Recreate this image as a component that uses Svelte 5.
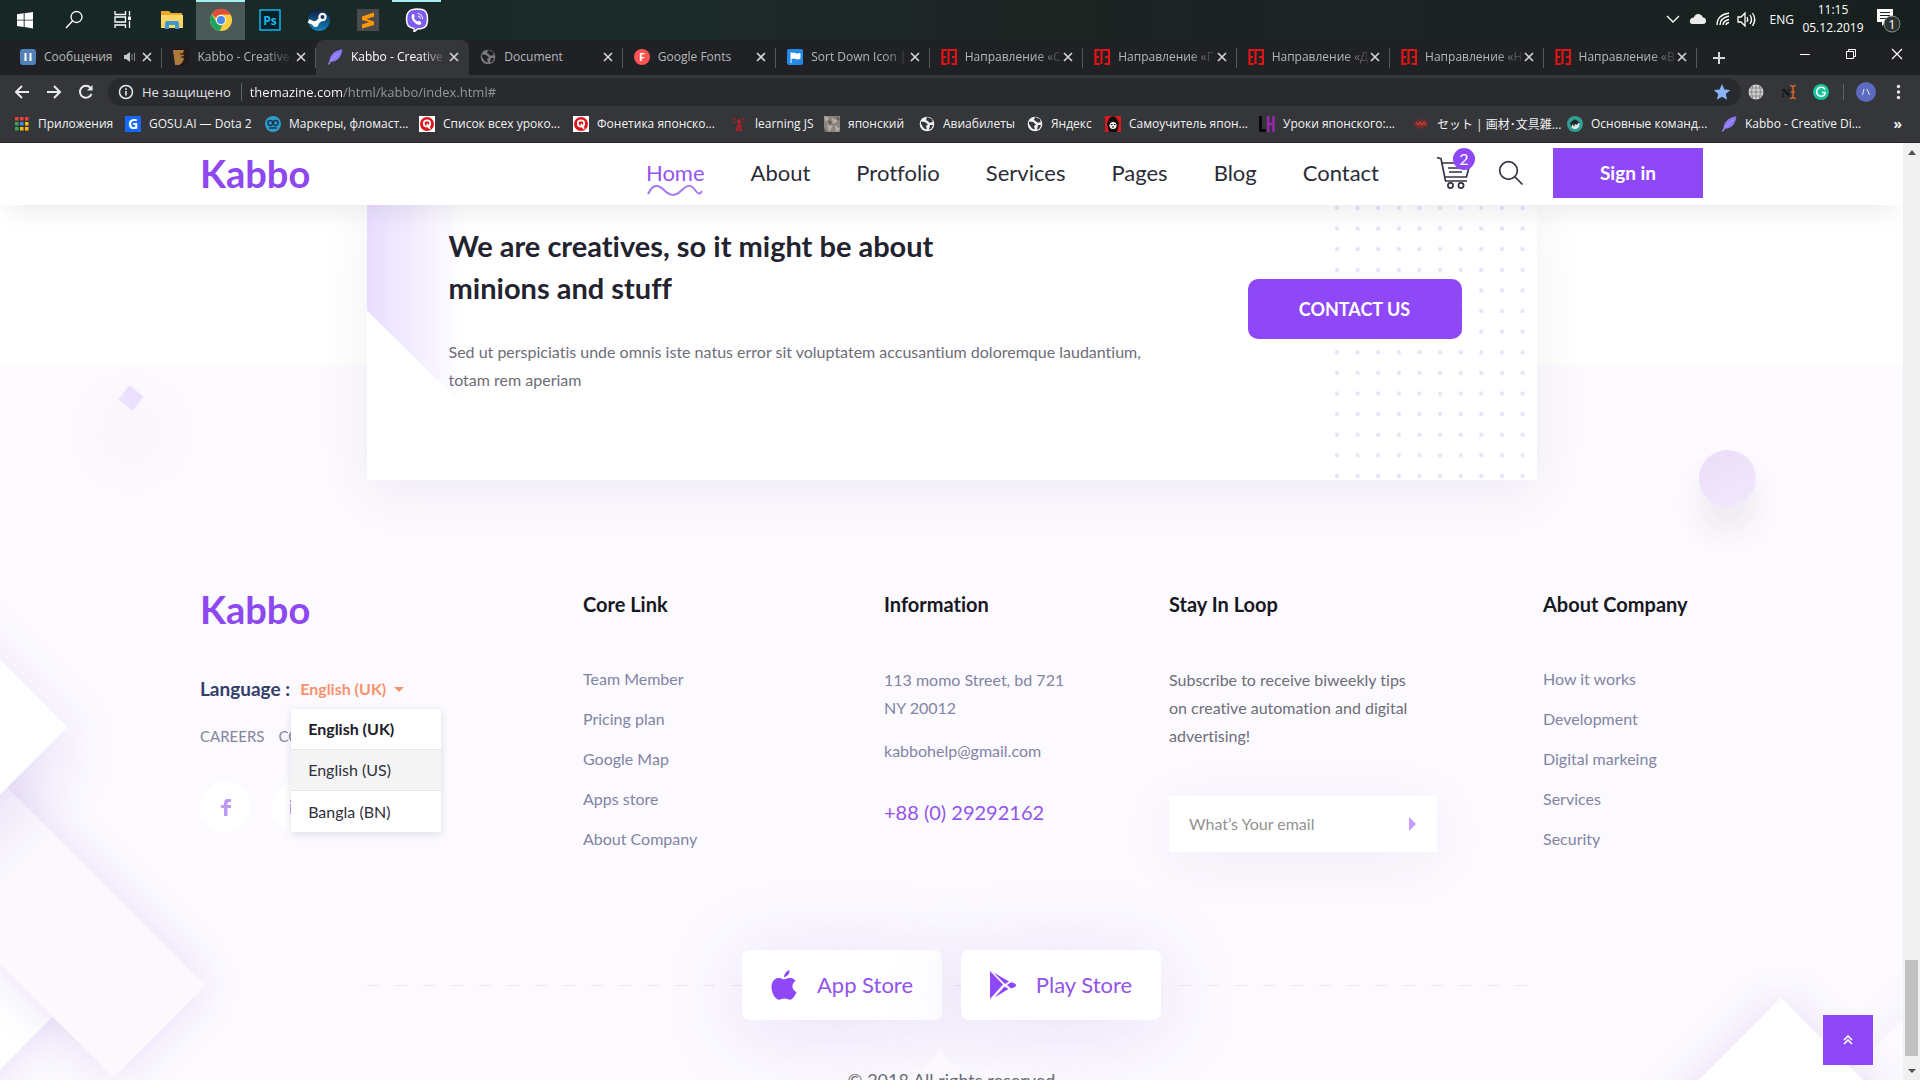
<script>
  let langOpen = $state(true);
  let language = $state('English (UK)');
  let email = $state('');
  let address = $state('themazine.com/html/kabbo/index.html#');

  const apps = ['start', 'search', 'taskview', 'folder', 'chrome', 'ps', 'steam', 'sublime', 'viber'];
  const tabs = [
    { icon: 'pause', title: 'Сообщения', audio: true },
    { icon: 'comic', title: 'Kabbo - Creative', fade: true },
    { icon: 'feather', title: 'Kabbo - Creative', active: true, fade: true },
    { icon: 'globeDim', title: 'Document' },
    { icon: 'fonts', title: 'Google Fonts' },
    { icon: 'flag', title: 'Sort Down Icon |', fade: true },
    { icon: 'red', title: 'Направление «С', fade: true },
    { icon: 'red', title: 'Направление «Г', fade: true },
    { icon: 'red', title: 'Направление «Д', fade: true },
    { icon: 'red', title: 'Направление «Н', fade: true },
    { icon: 'red', title: 'Направление «В', fade: true },
  ];
  const bookmarks = [
    ['apps', 'Приложения'],
    ['gosu', 'GOSU.AI — Dota 2'],
    ['owl', 'Маркеры, фломаст...'],
    ['q', 'Список всех уроко...'],
    ['q', 'Фонетика японско...'],
    ['tower', 'learning JS'],
    ['photo', 'японский'],
    ['globe', 'Авиабилеты'],
    ['globe', 'Яндекс'],
    ['monk', 'Самоучитель япон...'],
    ['lh', 'Уроки японского:...'],
    ['stamp', 'セット | 画材･文具雑...'],
    ['teal', 'Основные команд...'],
    ['feather', 'Kabbo - Creative Di...'],
  ];
  const nav = ['Home', 'About', 'Protfolio', 'Services', 'Pages', 'Blog', 'Contact'];
  const coreLinks = ['Team Member', 'Pricing plan', 'Google Map', 'Apps store', 'About Company'];
  const companyLinks = ['How it works', 'Development', 'Digital markeing', 'Services', 'Security'];
  const languages = ['English (UK)', 'English (US)', 'Bangla (BN)'];
</script>

{#snippet appIcon(kind)}
  <svg width="24" height="24" viewBox="0 0 24 24" aria-hidden="true">
    {#if kind === 'start'}
      <path fill="#fff" d="M4 6.3l6.700-1v6.400H4zM11.600 5.200L20 4v7.700h-8.400zM4 12.600h6.700v6.300L4 18zM11.600 12.600H20V20.400l-8.400-1.300z" />
    {:else if kind === 'search'}
      <circle cx="14.500" cy="9" r="5.500" fill="none" stroke="#fff" stroke-width="1.300" /><path d="M10.500 13L4 20" stroke="#fff" stroke-width="1.400" />
    {:else if kind === 'taskview'}
      <path fill="none" stroke="#fff" stroke-width="1.300" d="M4 3v3.500h10.500V3M4 20v-3h10.500v3M4 9h10.500v5H4zM18.500 3v4.500M18.500 13v7" /><rect x="17" y="8.500" width="3" height="3.500" fill="#fff" />
    {:else if kind === 'folder'}
      <path d="M1 3h8l2 2h11v15H1z" fill="#e6a92a" /><path d="M1 7h22v13H1z" fill="#ffd766" /><path d="M5 21v-6q0-2 2-2h10q2 0 2 2v6h-4v-4H9v4z" fill="#3c97d3" />
    {:else if kind === 'chrome'}
      <circle cx="12" cy="12" r="11" fill="#ffcd40" /><path d="M12 1a11 11 0 0 1 9.600 5.600H12a5.400 5.400 0 0 0-5 3.400L2.800 6A11 11 0 0 1 12 1z" fill="#e24a3b" /><path d="M2.800 6l4.700 8.500a5.400 5.400 0 0 0 6 2.700L10.700 23A11 11 0 0 1 2.800 6z" fill="#1da462" /><circle cx="12" cy="12" r="5" fill="#fff" /><circle cx="12" cy="12" r="4" fill="#4788f0" />
    {:else if kind === 'ps'}
      <rect x="2" y="2" width="20" height="20" fill="#03202b" stroke="#10b5e8" stroke-width="1.500" /><text x="12" y="16.500" text-anchor="middle" font-size="12" font-weight="700" fill="#19b8ec">Ps</text>
    {:else if kind === 'steam'}
      <defs><linearGradient id="steam" x2="0" y2="1"><stop stop-color="#101c3d" /><stop offset="1" stop-color="#1383bd" /></linearGradient></defs>
      <circle cx="12" cy="12" r="11" fill="url(#steam)" /><path d="M1.500 13l7 3 5.500-5" stroke="#fff" stroke-width="4" fill="none" /><circle cx="15.500" cy="9" r="4.200" fill="#fff" /><circle cx="15.500" cy="9" r="2.300" fill="#17335b" stroke="#fff" stroke-width=".6" /><circle cx="8.500" cy="16" r="3" fill="#fff" />
    {:else if kind === 'sublime'}
      <rect x="1" y="1" width="22" height="22" rx="1" fill="#4a4a4a" /><path d="M6 8.500L18 4.500v4L10.500 11 18 13.500v3.500L6 20.500v-4l7.500-2.500L6 12z" fill="#ff9800" />
    {:else if kind === 'viber'}
      <path d="M12 1c8 0 10.500 2.500 10.500 10S20 21 12.500 21L9 24v-3.500C3.500 19.500 1.500 17.500 1.500 11S4 1 12 1z" fill="#7d5cf0" stroke="#fff" stroke-width="1.500" /><path d="M7.500 6.200c2-1 2.500 2.500 1.700 3.300-.6.800 2.500 4.300 3.600 3.700 1.200-.7 4 1 3.400 2.300-1.300 3-5.300.7-7.200-1.400S5.500 8 7.500 6.200z" fill="#fff" /><path d="M12.500 5.500q5 .5 5 5.500M13 8q2.300.3 2.300 2.600" fill="none" stroke="#fff" />
    {/if}
  </svg>
{/snippet}

{#snippet favicon(kind)}
  <svg class="fav" width="16" height="16" viewBox="0 0 16 16" aria-hidden="true">
    {#if kind === 'pause'}
      <rect width="16" height="16" rx="3" fill="#5181b8" /><path d="M5.500 4v8M10.500 4v8" stroke="#fff" stroke-width="2" />
    {:else if kind === 'comic'}
      <rect x="1" width="15" height="16" fill="#201b18" /><path d="M0 1h11l-1 3 1 2-1 2 1 2-2 4-3 2H2z" fill="#b07a3c" /><path d="M7 5h4M8 8h3" stroke="#111" />
    {:else if kind === 'feather'}
      <path d="M15.500.5C9 1 3 5 2.500 12L.8 15.500l1.200.3 1.500-3C10 13 14 9 15.500.5z" fill="#8b78f8" /><path d="M2 15C5 10 8 7 12 4" stroke="#b8acff" stroke-width=".7" fill="none" />
    {:else if kind === 'globe' || kind === 'globeDim'}
      <circle cx="8" cy="8" r="7.300" fill={kind === 'globe' ? '#f1f3f4' : '#77797c'} /><path d="M2 5.500l4 .5 3 2.500L7 10l1 3.500-3-1L2 8zM8 1l5 2 .7 3-3 .7L8.500 5 7 4z M11 9h3l-1.500 3.500L10 14z" fill={kind === 'globe' ? '#35363a' : '#202124'} />
    {:else if kind === 'fonts'}
      <circle cx="8" cy="8" r="8" fill="#ff5252" /><text x="8" y="12" text-anchor="middle" font-size="11" font-weight="700" fill="#fff">F</text>
    {:else if kind === 'flag'}
      <rect width="16" height="16" rx="2" fill="#228ae6" /><path d="M4 3v11M4.500 4.500q2-1 4 0t4.500 0v5q-2.500 1-4.500 0t-4 0z" fill="#fff" stroke="#fff" />
    {:else if kind === 'red'}
      <path d="M6 1H1.500v14H6M1.500 8H5M10.500 1H7.500v14M10.500 1H15v14h-4.500M11 8h4" fill="none" stroke="#e01414" stroke-width="2.200" />
    {:else if kind === 'apps'}
      {#each [0, 1, 2] as r}
        {#each [0, 1, 2] as c}
          <rect x={1 + c * 5} y={1 + r * 5} width="3.500" height="3.500" fill={['#ea4335', '#ea4335', '#ea4335', '#34a853', '#4285f4', '#fbbc05', '#34a853', '#fbbc05', '#fbbc05'][r * 3 + c]} />
        {/each}
      {/each}
    {:else if kind === 'gosu'}
      <rect width="16" height="16" fill="#1567f5" /><text x="8" y="13" text-anchor="middle" font-size="14" font-weight="700" fill="#fff">G</text>
    {:else if kind === 'owl'}
      <circle cx="8" cy="8" r="8" fill="#2f9ccb" /><g fill="none" stroke="#153b52" stroke-width="1.500"><circle cx="5.300" cy="7" r="2.400" /><circle cx="10.700" cy="7" r="2.400" /><path d="M4 12h8" /></g>
    {:else if kind === 'q'}
      <rect width="16" height="16" fill="#fff" /><circle cx="8" cy="8" r="7" fill="#e0151b" /><circle cx="8" cy="7.500" r="3.200" fill="none" stroke="#fff" stroke-width="1.800" /><path d="M8 8l3 5" stroke="#fff" stroke-width="1.800" />
    {:else if kind === 'tower'}
      <path d="M8 5L5 15M8 5l3 10M6 10h4l-4 4h5M2 2l3 2M14 2l-3 2M2 7l3-1M14 7l-3-1" fill="none" stroke="#a8222c" stroke-width="1.300" /><circle cx="8" cy="5" r="1.700" fill="#c3222c" />
    {:else if kind === 'photo'}
      <rect width="16" height="16" fill="#8b857f" /><path d="M0 0l5 2-3 4zM8 2l6 3-5 3zM3 9l6 1-4 6zM11 9l5 4-4 3z" fill="#b5afa8" /><path d="M4 4l4 2-2 3zM12 0l4 3-2 2zM0 12l3 4H0z" fill="#5f5a55" />
    {:else if kind === 'monk'}
      <rect width="16" height="16" fill="#d71a1d" /><path d="M8 0q5 2 6 8l-2 8H4L2 8q1-6 6-8z" fill="#110d0d" /><circle cx="8" cy="9.500" r="3.500" fill="#f3efea" /><path d="M6 8.500h1.500M9 8.500h1.500M7 11h2" stroke="#111" />
    {:else if kind === 'lh'}
      <path d="M1.500 0v14.500H7" fill="none" stroke="#000" stroke-width="2.500" /><path d="M9.200 0v16M14.500 0v16M9 8h6" stroke="#9c27b0" stroke-width="2.400" />
    {:else if kind === 'stamp'}
      <path d="M0 6l3 .5L4 3l2 2 2-3 2 3 3-2v3l3 .5-2 2.500 1 2-3-.5-2 3-2-2-3 1.500-1-2.500-3 .5 1-2z" fill="#7c2b2b" /><path d="M3 6l2 3 2-3 2 3 2-3 2 3" fill="none" stroke="#c64b45" />
    {:else if kind === 'teal'}
      <circle cx="8" cy="8" r="8" fill="#2f9e94" /><circle cx="8" cy="8.500" r="4.500" fill="#dfe9e8" /><path d="M3 7q5-7 10 0l-2 0-1 2-2-1-1 3-1-3-2 3z" fill="#1d2b2b" />
    {/if}
  </svg>
{/snippet}

<svelte:head><title>Kabbo</title></svelte:head>

<div class="desktop">
  <div class="taskbar">
    <div class="apps">
      {#each apps as app}
        <button class="app" class:current={app === 'chrome'} class:running={app === 'viber'} aria-label={app}>{@render appIcon(app)}</button>
      {/each}
    </div>
    <div class="tray">
      <svg width="98" height="20" viewBox="0 0 98 20" aria-hidden="true">
        <g fill="none" stroke="#fff" stroke-width="1.300">
          <path d="M3 7l6 6 6-6" />
          <path d="M53 16q0-10 12-12M56 16q0-7 9-9M59 16q0-4 6-5.500M62 16q0-2 3-2.500" />
          <path d="M74 8h3l4-4v13l-4-4h-3zM83 8q1.500 2.500 0 5M86 6q3 4.500 0 9M88.500 4q4.500 6.500 0 13" />
        </g>
        <path d="M28 15q-3-1-2-4t4-2.500q1-4 5-3.500 3 .5 4 3.500 3 0 3 3.500 0 3-3 3z" fill="#ececec" />
      </svg>
      <span>ENG</span>
      <span class="clock">11:15<br />05.12.2019</span>
      <svg width="32" height="32" viewBox="0 0 32 32" aria-hidden="true">
        <path d="M3 6h16v13h-7l-4 4v-4H3z" fill="#fff" /><path d="M6 9.500h10M6 12.500h10M6 15.500h7" stroke="#1c2625" /><circle cx="18" cy="21" r="8" fill="#2c3332" stroke="#8a8f8e" /><text x="18" y="26" font-size="13" text-anchor="middle" fill="#fff">1</text>
      </svg>
    </div>
  </div>

  <div class="tabstrip">
    <div class="tabs">
      {#each tabs as tab}
        <div class="tab" class:active={tab.active}>
          <button class="tab-main">
            {@render favicon(tab.icon)}
            <span class="tab-title" class:fade={tab.fade}>{tab.title}</span>
          </button>
          {#if tab.audio}
            <svg width="14" height="12" viewBox="0 0 14 12" aria-hidden="true"><path d="M1 4h2l4-3v10L3 8H1z" fill="#c4c7ca" /><path d="M9 3v6M11.500 2v8" stroke="#85888c" /></svg>
          {/if}
          <button class="x" aria-label="Close tab"><svg width="10" height="10" viewBox="0 0 10 10"><path d="M1 1l8 8M9 1L1 9" stroke="currentColor" stroke-width="1.600" /></svg></button>
        </div>
      {/each}
    </div>
    <button class="plus" aria-label="New tab"><svg width="14" height="14" viewBox="0 0 14 14"><path d="M7 1v12M1 7h12" stroke="#d5d7da" stroke-width="2" /></svg></button>
    <div class="window-buttons">
      <button aria-label="Minimize"><svg width="12" height="12" viewBox="0 0 12 12"><path d="M1 6.500h10" stroke="#fff" /></svg></button>
      <button aria-label="Restore"><svg width="12" height="12" viewBox="0 0 12 12"><path d="M1.500 3.500h7v7h-7zM3.500 3V1.500h7v7H9" fill="none" stroke="#fff" /></svg></button>
      <button aria-label="Close window"><svg width="12" height="12" viewBox="0 0 12 12"><path d="M1 1l10 10M11 1L1 11" stroke="#fff" stroke-width="1.200" /></svg></button>
    </div>
  </div>

  <div class="toolbar">
    <div class="history">
      <button aria-label="Back"><svg width="16" height="16" viewBox="0 0 16 16"><path d="M15 8H2M8 2L2 8l6 6" /></svg></button>
      <button aria-label="Forward"><svg width="16" height="16" viewBox="0 0 16 16"><path d="M1 8h13M8 2l6 6-6 6" /></svg></button>
      <button aria-label="Reload"><svg width="16" height="16" viewBox="0 0 16 16"><path d="M13.500 10a6 6 0 1 1-1-6.200L14 5.500" /><path d="M14.500 1v5.500H9z" class="solid" /></svg></button>
    </div>
    <div class="omnibox">
      <svg width="16" height="16" viewBox="0 0 16 16" aria-hidden="true"><circle cx="8" cy="8" r="6.500" fill="none" stroke="#e8eaed" stroke-width="1.500" /><path d="M8 7v4.500M8 4.300v1.600" stroke="#e8eaed" stroke-width="1.600" /></svg>
      <span class="secure">Не защищено</span>
      <input class="url" aria-label="Address" bind:value={address} />
      <svg width="18" height="18" viewBox="0 0 18 18" aria-hidden="true"><path d="M9 1l2.400 5.400 5.800.6-4.400 3.900 1.300 5.900L9 13.700l-5.100 3.100 1.300-5.900L.8 7l5.800-.6z" fill="#8ab4f8" /></svg>
    </div>
    <svg class="extensions" width="179" height="26" viewBox="0 0 179 26" aria-hidden="true">
      <circle cx="15" cy="13" r="7.500" fill="#d2d2d2" /><path d="M15 5.500v15M7.500 13h15M9 9h12M9 17h12M11.500 7q-2 6 0 12M18.500 7q2 6 0 12" stroke="#77797c" fill="none" stroke-width=".8" />
      <text x="45" y="18" text-anchor="middle" font-size="13" font-weight="700" fill="#111" class="serif">N</text><path d="M49 6.500q3 0 3 2v9q0 2-3 2M55 6.500q-3 0-3 2v9q0 2 3 2M50 13h4" fill="none" stroke="#d0682c" stroke-width="1.500" />
      <circle cx="80" cy="13" r="8" fill="#15c39a" /><path d="M84 10.500a4.500 4.500 0 1 0 0 4.500v-1.500h-3" fill="none" stroke="#fff" stroke-width="1.600" />
      <path d="M102.500 5v16" stroke="#5f6368" />
      <circle cx="125" cy="13" r="10" fill="#5c6bc0" /><path d="M121.500 16l1.500-6M126 10l2.500 6" stroke="#e3e6ff" fill="none" />
      <circle cx="157.500" cy="7.500" r="1.700" fill="#e8eaed" /><circle cx="157.500" cy="13" r="1.700" fill="#e8eaed" /><circle cx="157.500" cy="18.500" r="1.700" fill="#e8eaed" />
    </svg>
  </div>

  <div class="bookmarks">
    {#each bookmarks as [icon, label]}
      <a href="#bookmark">{@render favicon(icon)}<span>{label}</span></a>
    {/each}
    <button class="more" aria-label="More bookmarks">»</button>
  </div>

  <div class="viewport">
    <div class="page">
      <header>
        <a class="logo" href="#home">Kabbo</a>
        <nav>
          {#each nav as item, i}
            <a href="#{item}" class:on={i === 0}>{item}
              {#if i === 0}
                <svg class="wave" width="56" height="12" viewBox="0 0 56 12" aria-hidden="true"><path d="M1 9C6-1 11-1 17 5s11 7 18 0 10-4 13 0 5 5 7 1" fill="none" stroke="#a678f5" stroke-width="2" /></svg>
              {/if}
            </a>
          {/each}
        </nav>
        <button class="cart" aria-label="Cart, 2 items">
          <svg width="36" height="34" viewBox="0 0 36 34"><g fill="none" stroke="#333342" stroke-width="1.700"><path d="M1 1.500l4 1.200L9.500 25H31M6.500 7H34l-3.500 14H9M12 12h15M13 16h13M14 7h12" /><circle cx="14.500" cy="29.500" r="2.600" /><circle cx="25" cy="29.500" r="2.600" /></g></svg>
          <span>2</span>
        </button>
        <button class="find" aria-label="Search"><svg width="26" height="26" viewBox="0 0 26 26"><circle cx="10.500" cy="10.500" r="8.800" fill="none" stroke="#333342" stroke-width="1.700" /><path d="M17 17l7.500 7.500" stroke="#333342" stroke-width="1.700" /></svg></button>
        <button class="signin">Sign in</button>
      </header>

      <section class="cta">
        <div class="card">
          <div class="wedge"></div>
          <svg class="dots" width="200" height="100%" aria-hidden="true">
            <defs><pattern id="dot" width="20.620" height="20.620" patternUnits="userSpaceOnUse"><circle cx="3" cy="3" r="2.200" fill="#e9e3f8" /></pattern></defs>
            <rect width="194" height="100%" fill="url(#dot)" />
          </svg>
          <div class="copy">
            <h2>We are creatives, so it might be about minions and stuff</h2>
            <p>Sed ut perspiciatis unde omnis iste natus error sit voluptatem accusantium doloremque laudantium, totam rem aperiam</p>
          </div>
          <button class="contact">CONTACT US</button>
        </div>
      </section>

      <footer>
        <div class="columns">
          <div class="brand">
            <a class="logo" href="#home">Kabbo</a>
            <div class="language">
              <span id="lang-label">Language :</span>
              <div class="picker">
                <button class="toggle" aria-labelledby="lang-label" aria-haspopup="listbox" aria-expanded={langOpen} onclick={() => (langOpen = !langOpen)}>{language}<i></i></button>
                {#if langOpen}
                  <div class="menu" role="listbox" aria-labelledby="lang-label">
                    {#each languages as option, i}
                      <button role="option" aria-selected={option === language} class:chosen={option === language} class:hover={i === 1} onclick={() => { language = option; langOpen = false; }}>{option}</button>
                    {/each}
                  </div>
                {/if}
              </div>
            </div>
            <div class="small-links"><a href="#careers">CAREERS</a><a href="#contact">CONTACT</a></div>
            <div class="social">
              <a href="#facebook" aria-label="Facebook"><svg width="12" height="18" viewBox="0 0 12 18"><path d="M11 1v3H9Q7.500 4 7.500 5.500V7H11v3H7.500v8H4v-8H1V7h3V5q0-4 4-4z" fill="#bd98f5" /></svg></a>
              <a href="#linkedin" aria-label="LinkedIn"><svg width="18" height="16" viewBox="0 0 18 16"><path d="M1 5h3v10H1zM1 1h3v2.500H1zM7 5h3v2q3-4 7 0v8h-3V8q-2-2-4 0v7H7z" fill="#bd98f5" /></svg></a>
            </div>
          </div>
          <div>
            <h3>Core Link</h3>
            <ul>{#each coreLinks as link}<li><a href="#link">{link}</a></li>{/each}</ul>
          </div>
          <div>
            <h3>Information</h3>
            <address>113 momo Street, bd 721<br />NY 20012</address>
            <a class="mail" href="#mail">kabbohelp@gmail.com</a>
            <a class="phone" href="#phone">+88 (0) 29292162</a>
          </div>
          <div>
            <h3>Stay In Loop</h3>
            <p class="note">Subscribe to receive biweekly tips on creative automation and digital advertising!</p>
            <form class="subscribe">
              <input type="email" aria-label="Your email" placeholder="What’s Your email" bind:value={email} />
              <button type="button" aria-label="Subscribe"><svg width="8" height="14" viewBox="0 0 8 14"><path d="M0 0l7 7-7 7z" fill="#c49cfb" /></svg></button>
            </form>
          </div>
          <div>
            <h3>About Company</h3>
            <ul>{#each companyLinks as link}<li><a href="#link">{link}</a></li>{/each}</ul>
          </div>
        </div>

        <div class="stores">
          <a href="#appstore">
            <svg width="26" height="30" viewBox="0 0 26 30" aria-hidden="true"><path d="M18.500 0q.5 5-5.500 7.500Q13 2 18.500 0zM13 9.500c3-1 4-1.700 6.500-1.500 2.300.2 4 1.300 5 2.800-4.500 3-4 9 1 11.200-1.500 4-4 7.500-6.500 7.700-2 0-3-1.200-5.500-1.200S10 29.700 8 29.700C3 29.500-1 19 1 13.500 2 10 5 8 8 8c2 0 3.500 1 5 1.500z" fill="#8e48f8" /></svg>
            App Store
          </a>
          <a href="#playstore">
            <svg width="26" height="28" viewBox="0 0 26 28" aria-hidden="true"><path d="M0 0l13 13.500L0 28zM3.500 1.500L19 10.500l-4 2.500zM14.500 15.500l4 2.500-14 8.500zM17 14l4-2.700q5 1 5 3T21 17.500z" fill="#8e48f8" /></svg>
            Play Store
          </a>
        </div>
        <p class="copyright">© 2018 All rights reserved</p>
      </footer>

      <div class="decor" aria-hidden="true">
        <i class="shape low-left"></i>
        <i class="shape slab"></i>
        <i class="shape left"></i>
        <i class="shape far-right"></i>
        <i class="shape right"></i>
        <i class="halo"></i>
        <i class="chip"></i>
        <i class="ball"></i>
      </div>
      <button class="top" aria-label="Back to top"><svg width="10" height="10" viewBox="0 0 10 10"><path d="M1 5l4-4 4 4M1 9l4-4 4 4" fill="none" stroke="#fff" stroke-width="1.700" /></svg></button>
    </div>
    <div class="scrollbar"><i class="up"></i><i class="thumb"></i><i class="down"></i></div>
  </div>
</div>

<style>
  :global(body) { margin: 0; overflow: hidden; }
  * { box-sizing: border-box; }
  a { color: inherit; text-decoration: none; }
  button { border: 0; padding: 0; background: none; color: inherit; font: inherit; cursor: pointer; }
  svg { display: block; flex: none; }
  .desktop { height: 100vh; display: flex; flex-direction: column; overflow: hidden; font-family: 'Open Sans', 'Noto Sans CJK JP', sans-serif; font-size: 12px; color: #fff; background: #202124; }

  .taskbar { flex: none; height: 40px; display: flex; justify-content: space-between; background: linear-gradient(90deg, #172726, #1c2b29 35%, #1d2322 58%, #1b2524 70%, #18201f); }
  .apps { display: flex; }
  .app { width: 49px; display: grid; place-items: center; padding-bottom: 2px; border-top: 2px solid transparent; }
  .app.current { background: #4a5856; border-color: #a6f0ef; }
  .app.running { border-color: #a6f0ef; }
  .tray { display: flex; align-items: center; gap: 8px; padding: 0 14px 2px 0; }
  .clock { width: 62px; text-align: center; line-height: 18px; margin-right: 2px; white-space: nowrap; }

  .tabstrip { flex: none; height: 35px; display: flex; align-items: stretch; padding-left: 9px; color: #b4b8bc; }
  .tabs { flex: 0 1 1688px; min-width: 0; display: flex; }
  .tab { flex: 1 1 0; min-width: 0; display: flex; align-items: center; gap: 2px; padding: 0 7px 2px 11px; background: linear-gradient(#55585c, #55585c) right center / 1px 20px no-repeat; }
  .tab-main { flex: 1; min-width: 0; display: flex; align-items: center; gap: 8px; text-align: left; }
  .tab-title { white-space: nowrap; }
  .tab-title.fade { mask-image: linear-gradient(90deg, #000 75%, rgba(0, 0, 0, .15)); }
  .tab.active { background: #35363a; color: #fff; border-radius: 8px 8px 0 0; }
  .x { width: 16px; height: 18px; display: grid; place-items: center; color: #d5d7da; }
  .plus { width: 44px; display: grid; place-items: center; }
  .window-buttons { margin-left: auto; display: flex; height: 28px; }
  .window-buttons button { width: 46px; display: grid; place-items: center; }

  .toolbar { flex: none; height: 34px; display: flex; align-items: center; background: #35363a; font-size: 13px; }
  .history { width: 108px; display: flex; gap: 16px; padding-left: 14px; }
  .history svg { fill: none; stroke: #e8eaed; stroke-width: 2; }
  .history .solid { fill: #e8eaed; stroke: none; }
  .omnibox { flex: 1; height: 28px; display: flex; align-items: center; gap: 8px; padding: 0 10px; background: #282a2d; border-radius: 14px; }
  .secure { padding-right: 10px; color: #e1e3e6; border-right: 1px solid #5f6368; line-height: 18px; }
  .url { flex: 1; border: 0; padding: 0; outline: 0; background: linear-gradient(90deg, #fff 93px, #969ba1 93px); background-clip: text; color: transparent; font: inherit; }
  .serif { font-family: 'Liberation Serif', serif; }

  .bookmarks { flex: none; height: 34px; display: grid; align-items: center; grid-template-columns: 111px 140px 154px 154px 158px 93px 95px 108px 78px 154px 154px 154px 154px 1fr auto; padding: 0 18px 4px 14px; background: #35363a; border-bottom: 1px solid #26282b; color: #f1f3f4; }
  .bookmarks a { display: flex; align-items: center; gap: 8px; min-width: 0; white-space: nowrap; }
  .more { font-size: 14px; font-weight: 700; }

  .viewport { flex: 1; min-height: 0; display: flex; }
  .page { flex: 1; min-width: 0; position: relative; overflow: hidden; isolation: isolate; background: #fcfaff; font-family: Lato, 'Open Sans', sans-serif; font-size: 16px; font-variant-ligatures: none; line-height: 28px; color: #6d6d78; }
  .logo { color: #8e48f0; font-size: 38px; line-height: 48px; font-weight: 700; }

  header { position: relative; z-index: 3; height: 62px; padding: 0 200px 2px; display: flex; align-items: center; background: #fff; box-shadow: 0 10px 30px -8px rgba(30, 30, 40, .11); color: #2c2c38; }
  nav { display: flex; gap: 46px; margin-left: auto; font-size: 22px; }
  nav a { position: relative; }
  nav .on { color: #9355f2; }
  .wave { position: absolute; left: 1px; top: 26px; }
  .cart { position: relative; margin-left: 57px; }
  .cart span { position: absolute; left: 17px; top: -8px; width: 22px; height: 22px; border-radius: 50%; background: #8e48f8; color: #fff; font-size: 16px; line-height: 22px; }
  .find { margin: 0 29px 0 26px; }
  .signin { width: 150px; height: 50px; background: #8e48f8; color: #fff; font-size: 19px; font-weight: 700; }

  .cta { position: relative; z-index: 1; background: linear-gradient(#fff 160px, transparent 160px); padding: 0 40px; }
  .card { position: relative; max-width: 1170px; margin: 0 auto; padding: 20px 75px 86px 82px; display: flex; justify-content: space-between; background: #fff; box-shadow: 0 12px 50px rgba(50, 50, 80, .07); }
  .wedge { position: absolute; left: 0; top: 0; width: 98px; height: 202px; background: linear-gradient(90deg, #e9ddff, rgba(240, 232, 255, 0)); clip-path: polygon(0 0, 100% 0, 100% 100%, 0 105px); }
  .dots { position: absolute; right: 3px; top: 0; }
  .copy { position: relative; width: 730px; }
  h2 { margin: 0 0 29px; width: 540px; font-size: 29px; line-height: 42px; color: #232330; }
  p { margin: 0; }
  .contact { position: relative; width: 214px; height: 60px; margin-top: 54px; border-radius: 10px; background: #8e48f8; color: #fff; font-size: 18px; font-weight: 700; }

  footer { position: relative; z-index: 1; padding: 105px 200px 0; }
  .columns { display: grid; grid-template-columns: 383fr 301fr 285fr 374fr 160fr; }
  h3 { margin: 5px 0 41px; font-size: 20px; line-height: 28px; color: #17171f; white-space: nowrap; }
  ul { list-style: none; margin: 0; padding: 0; line-height: 40px; color: #8184a3; white-space: nowrap; }
  .brand { display: flex; flex-direction: column; align-items: flex-start; }
  .language { display: flex; gap: 10px; margin-top: 42px; font-size: 19px; font-weight: 700; color: #333e69; }
  .picker { position: relative; }
  .toggle { display: flex; align-items: center; gap: 8px; color: #f8926c; font-size: 16px; line-height: 28px; }
  .toggle i { border: 5px solid transparent; border-top-color: #f8926c; border-bottom: 0; }
  .menu { position: absolute; z-index: 2; left: -9px; top: 34px; width: 150px; background: #fff; box-shadow: 0 2px 8px rgba(50, 50, 80, .14); }
  .menu button { display: block; width: 100%; height: 41px; padding-left: 17px; text-align: left; font-size: 16px; font-weight: 400; color: #30303b; border-bottom: 1px solid #e6e6e8; }
  .menu button:last-child { border-bottom: 0; }
  .menu .chosen { font-weight: 700; color: #20202a; }
  .menu .hover { background: #f4f4f5; }
  .small-links { display: flex; gap: 14px; margin-top: 19px; color: #83859c; font-size: 15px; }
  .social { display: flex; gap: 21px; margin-top: 31px; }
  .social a { width: 51px; height: 51px; display: grid; place-items: center; border-radius: 50%; background: #fff; }
  address { font-style: normal; color: #8184a3; }
  h3 + address, h3 + .note { margin-top: 48px; }
  .mail { display: block; margin-top: 15px; color: #8184a3; }
  .phone { display: block; margin-top: 33px; font-size: 20px; color: #9254ea; }
  .note { width: 250px; }
  .subscribe { width: 268px; height: 56px; margin-top: 46px; display: flex; align-items: center; padding: 0 20px; background: #fff; box-shadow: 0 10px 60px rgba(50, 50, 80, .06); }
  .subscribe input { flex: 1; min-width: 0; border: 0; padding: 0; outline: 0; background: none; font: inherit; color: #555; }
  .subscribe input::placeholder { color: #929292; opacity: 1; }

  .stores { display: flex; justify-content: center; gap: 19px; max-width: 1170px; margin: 91px auto 0; background: repeating-linear-gradient(90deg, #ece8f1 0 12px, transparent 12px 28px) center / 100% 1px no-repeat; }
  .stores a { width: 200px; height: 70px; display: flex; align-items: center; justify-content: center; gap: 20px; border-radius: 8px; background: #fff; color: #9254ea; font-size: 22px; white-space: nowrap; box-shadow: 0 10px 80px rgba(130, 80, 210, .17); }
  .copyright { position: relative; isolation: isolate; margin-top: 46px; text-align: center; font-size: 18px; }
  .copyright::before { content: ''; position: absolute; z-index: -1; top: 5px; left: calc(50% - 62px); width: 100px; height: 100px; transform: rotate(45deg); background: #fbf8fe; }

  .decor { position: absolute; z-index: 0; inset: 0; overflow: hidden; }
  .shape { position: absolute; transform: rotate(45deg); background: #fff; box-shadow: 0 0 45px rgba(125, 70, 200, .16); }
  .left { width: 200px; height: 200px; left: -174px; top: 484px; box-shadow: 20px 10px 60px rgba(125, 70, 200, .14); }
  .slab { width: 400px; height: 130px; left: -182px; top: 682px; background: #fbf9fe; }
  .low-left { width: 200px; height: 200px; left: -140px; top: 725px; }
  .right { width: 200px; height: 200px; right: 22px; bottom: -159px; }
  .far-right { width: 200px; height: 200px; right: -180px; bottom: -100px; background: #fcfaff; box-shadow: 0 0 45px rgba(125, 70, 200, .07); }
  .halo { position: absolute; left: 66px; top: 224px; width: 130px; height: 130px; border-radius: 50%; background: radial-gradient(#f8f6fa, #fcfaff 70%); }
  .chip { position: absolute; left: 122px; top: 246px; width: 18px; height: 18px; background: #ebe0fd; transform: rotate(38deg); }
  .ball { position: absolute; right: 147px; top: 307px; width: 57px; height: 57px; border-radius: 50%; background: linear-gradient(150deg, #ecdcf8, #f1e9fd); box-shadow: 0 24px 30px rgba(50, 50, 70, .08); }
  .top { position: absolute; z-index: 4; right: 30px; bottom: 15px; width: 50px; height: 50px; display: grid; place-items: center; background: #8e48f8; }

  .scrollbar { width: 17px; display: flex; flex-direction: column; align-items: center; background: #f0f0f0; }
  .up { margin-top: 7px; border: 4px solid transparent; border-top: 0; border-bottom: 5px solid #505050; }
  .thumb { width: 13px; height: 96px; margin-top: auto; background: #c1c1c1; }
  .down { margin: 13px 0 7px; border: 4px solid transparent; border-bottom: 0; border-top: 4px solid #505050; }
</style>
